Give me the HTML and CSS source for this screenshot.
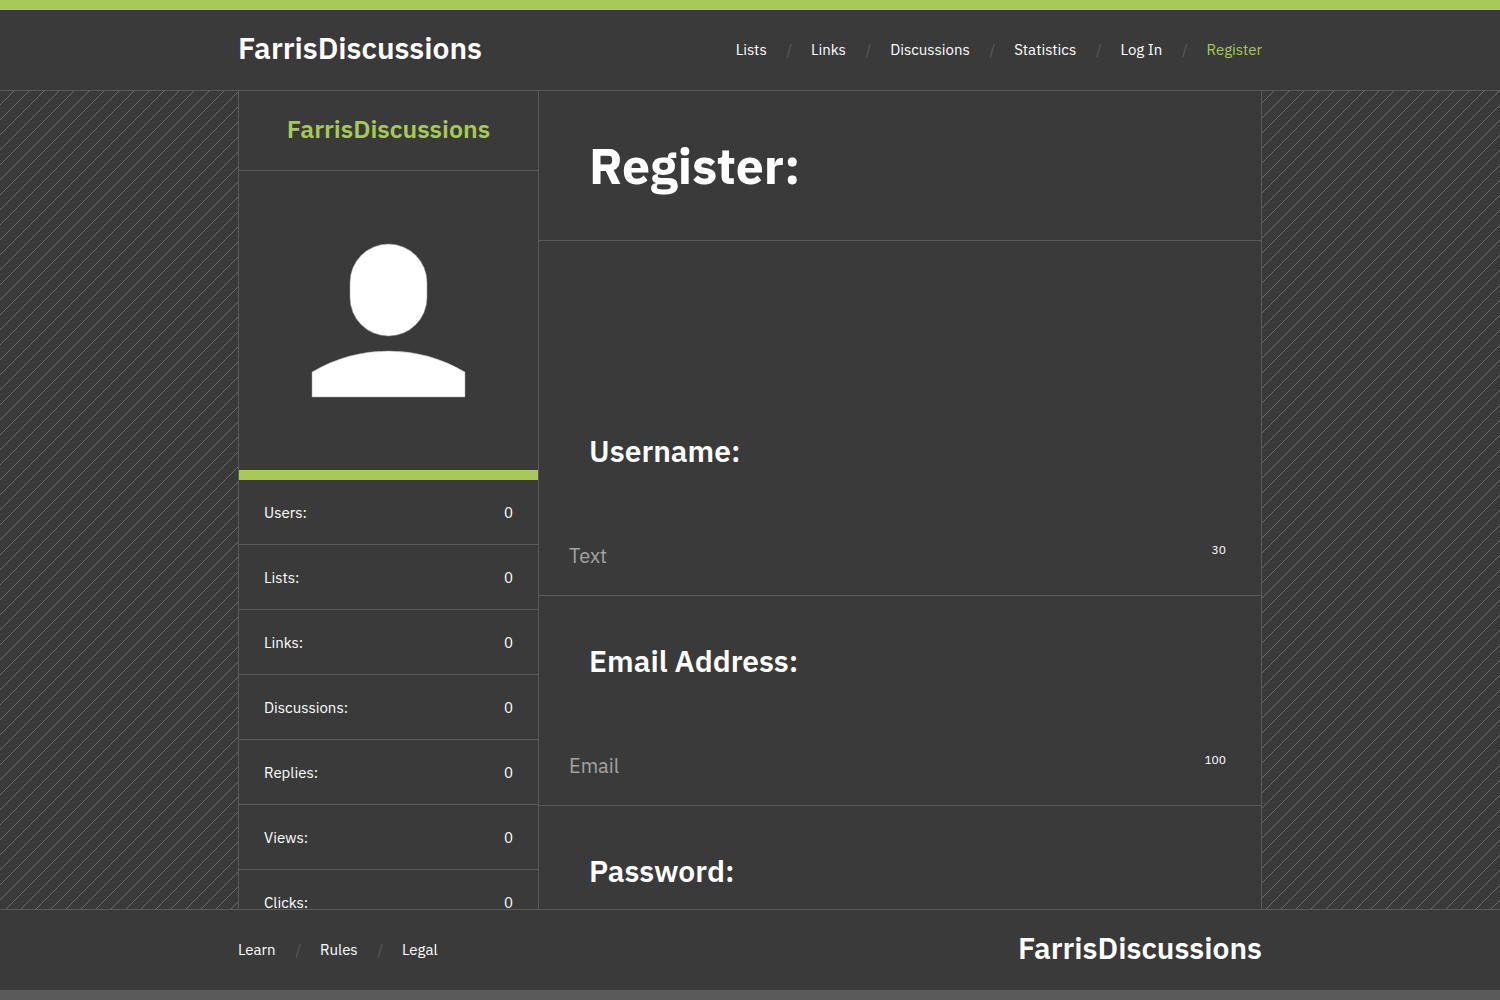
FILE: index.html
```html
<!DOCTYPE html>
<html lang="en">
<head>
<meta charset="utf-8">
<title>FarrisDiscussions - Register</title>
<link rel="stylesheet" href="styles.css">
</head>
<body>
<header class="site-header">
  <div class="bar">
    <a class="brand">FarrisDiscussions</a>
    <nav class="links">
      <a>Lists</a><i>/</i><a>Links</a><i>/</i><a>Discussions</a><i>/</i><a>Statistics</a><i>/</i><a>Log In</a><i>/</i><a class="active">Register</a>
    </nav>
  </div>
</header>
<main class="stage">
  <div class="columns">
    <aside class="sidebar">
      <h2 class="side-title"><span>FarrisDiscussions</span></h2>
      <div class="avatar">
        <svg width="299" height="299" viewBox="0 0 299 299" fill="#fff" stroke="#a0a0a0" stroke-width=".5"><rect x="111" y="73" width="77" height="92" rx="38.5"/><path d="M73 201Q108 180 149.500 180T226 201V226H73Z"/></svg>
      </div>
      <dl class="stats">
        <div><dt>Users:</dt><dd>0</dd></div>
        <div><dt>Lists:</dt><dd>0</dd></div>
        <div><dt>Links:</dt><dd>0</dd></div>
        <div><dt>Discussions:</dt><dd>0</dd></div>
        <div><dt>Replies:</dt><dd>0</dd></div>
        <div><dt>Views:</dt><dd>0</dd></div>
        <div><dt>Clicks:</dt><dd>0</dd></div>
      </dl>
    </aside>
    <section class="content">
      <h1 class="page-title"><span>Register:</span></h1>
      <form class="form">
        <label class="field"><span class="name">Username:</span><span class="entry"><span class="hint">Text</span><small>30</small></span></label>
        <label class="field"><span class="name">Email Address:</span><span class="entry"><span class="hint">Email</span><small>100</small></span></label>
        <label class="field"><span class="name">Password:</span></label>
      </form>
    </section>
  </div>
</main>
<footer class="site-footer">
  <div class="bar">
    <nav class="links">
      <a>Learn</a><i>/</i><a>Rules</a><i>/</i><a>Legal</a>
    </nav>
    <a class="brand">FarrisDiscussions</a>
  </div>
</footer>
</body>
</html>
```
FILE: styles.css
```css
* { box-sizing: border-box; margin: 0; padding: 0; }
body {
  height: 1000px;
  overflow: hidden;
  display: flex;
  flex-direction: column;
  background: #3a3a3a;
  color: #fff;
  font: 15px/20px "IBM Plex Sans", Roboto, sans-serif;
}
.site-header { height: 91px; border-top: 10px solid #a7c957; border-bottom: 1px solid #5a5a5a; }
.site-footer { height: 91px; border-top: 1px solid #5a5a5a; border-bottom: 10px solid #5a5a5a; }
.bar { width: 1024px; height: 80px; margin: 0 auto; display: flex; align-items: center; justify-content: space-between; }
.brand { font-size: 30px; line-height: 40px; font-weight: 600; padding-bottom: 5px; }
.links { display: flex; }
.links i { width: 44.3px; padding-left: 1px; text-align: center; color: #5a5a5a; font-style: normal; }
.links .active { color: #a7c957; }
.stage {
  height: 818px;
  overflow: hidden;
  background: #3a3a3a url("data:image/svg+xml,%3Csvg xmlns='http://www.w3.org/2000/svg' width='15' height='15'%3E%3Cpath d='M0 15L15 0' stroke='%236a6a6a'/%3E%3C/svg%3E") 0 -1px;
}
.columns { width: 1024px; height: 100%; margin: 0 auto; display: flex; background: #3a3a3a; border: solid #5a5a5a; border-width: 0 1px; }
.sidebar { width: 300px; flex: none; border-right: 1px solid #5a5a5a; }
.side-title { height: 80px; display: flex; justify-content: center; border-bottom: 1px solid #5a5a5a; color: #a7c957; font-size: 25px; line-height: 76px; font-weight: 600; }
.avatar { height: 309px; border-bottom: 10px solid #a7c957; }
.avatar svg { display: block; }
.stats div { height: 65px; padding: 2px 25px 0; display: flex; align-items: center; justify-content: space-between; border-bottom: 1px solid #5a5a5a; }
.content { flex: 1; }
.page-title { height: 150px; padding-left: 50px; border-bottom: 1px solid #5a5a5a; font-size: 50px; line-height: 150px; font-weight: 700; }
.form { padding-top: 145px; }
.field { display: block; height: 210px; padding-top: 45px; border-bottom: 1px solid #5a5a5a; }
.name { display: block; padding-left: 50px; font-size: 30px; line-height: 40px; font-weight: 600; }
.entry { display: flex; justify-content: space-between; padding: 70px 35px 0 30px; }
.hint { font-size: 20px; line-height: 30px; color: #a3a3a3; }
.entry small { font-size: 12px; line-height: 18px; }
```
